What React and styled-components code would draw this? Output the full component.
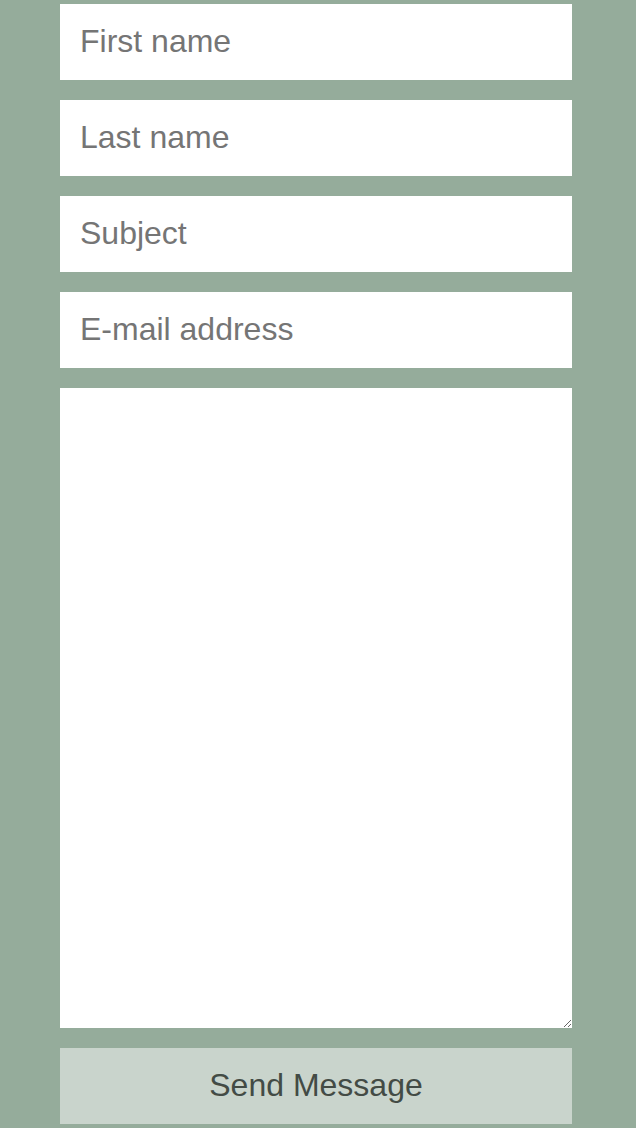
import React from "react";
import styled, { createGlobalStyle } from "styled-components";

const GlobalStyle = createGlobalStyle`
  html, body {
    margin: 0;
    padding: 0;
    background-color: #95ac9b;
    font-family: "Liberation Sans", Arial, sans-serif;
  }
`;

const Page = styled.div`
  padding: 4px 0 4px 60px;
  min-height: 1128px;
  box-sizing: border-box;
`;

const Form = styled.form`
  width: 512px;
  display: flex;
  flex-direction: column;
  gap: 20px;
`;

const Field = styled.input`
  box-sizing: border-box;
  width: 100%;
  height: 76px;
  padding: 0 20px 2px;
  border: none;
  border-radius: 0;
  background: #fff;
  font-family: inherit;
  font-size: 32px;
  color: #333;
  outline: none;

  &::placeholder {
    color: #757575;
  }
`;

const Message = styled.textarea`
  box-sizing: border-box;
  display: block;
  width: 100%;
  height: 640px;
  padding: 20px;
  border: none;
  border-radius: 0;
  background: #fff;
  font-family: inherit;
  font-size: 32px;
  outline: none;
  resize: vertical;
`;

const SendButton = styled.button`
  height: 76px;
  padding: 0 0 2px;
  border: none;
  border-radius: 0;
  background: #c9d4cc;
  color: #434b45;
  font-family: inherit;
  font-size: 32px;
  cursor: pointer;
`;

export default function App() {
  return (
    <>
      <GlobalStyle />
      <Page>
        <Form onSubmit={e => e.preventDefault()}>
          <Field placeholder="First name" />
          <Field placeholder="Last name" />
          <Field placeholder="Subject" />
          <Field placeholder="E-mail address" />
          <Message />
          <SendButton type="submit">Send Message</SendButton>
        </Form>
      </Page>
    </>
  );
}
